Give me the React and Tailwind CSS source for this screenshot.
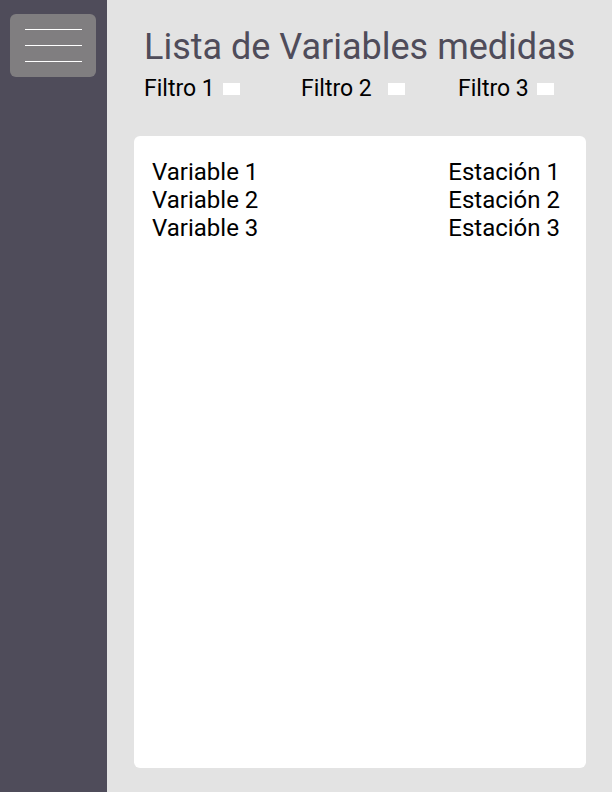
import React from "react";

const rows = [
  { variable: "Variable 1", station: "Estación 1" },
  { variable: "Variable 2", station: "Estación 2" },
  { variable: "Variable 3", station: "Estación 3" },
];

const filters = [
  { label: "Filtro 1", box: "ml-[8px]" },
  { label: "Filtro 2", box: "ml-[16px]" },
  { label: "Filtro 3", box: "ml-[8px]" },
];

export default function App() {
  return (
    <div className="flex w-[612px] h-[792px] font-['Roboto',sans-serif] bg-[#e3e3e3]">
      <aside className="w-[107px] shrink-0 bg-[#4f4c5a] pt-[14px] pl-[10px]">
        <button className="w-[86px] h-[63px] rounded-[6px] bg-[#807e80] flex flex-col items-center justify-center gap-[15px]">
          <span className="block w-[57px] h-px bg-white" />
          <span className="block w-[57px] h-px bg-white" />
          <span className="block w-[57px] h-px bg-white" />
        </button>
      </aside>
      <main className="flex-1 min-w-0 flex flex-col pl-[27px] pr-[26px] pt-[25px] pb-[24px]">
        <h1 className="pl-[10px] text-[36px] leading-[44px] text-[#4f4c5a] whitespace-nowrap">
          Lista de Variables medidas
        </h1>
        <div className="pl-[10px] mt-[6px] flex">
          {filters.map((f) => (
            <label key={f.label} className="w-[157px] last:w-auto flex items-center text-[23px] leading-[28px] text-black">
              {f.label}
              <span className={`${f.box} inline-block w-[17px] h-[12px] bg-white`} />
            </label>
          ))}
        </div>
        <section className="mt-[33px] flex-1 bg-white rounded-[6px] px-[18px] pt-[22px]">
          {rows.map((r) => (
            <div key={r.variable} className="flex justify-between pr-[8px] text-[24px] leading-[28px] text-black">
              <span>{r.variable}</span>
              <span>{r.station}</span>
            </div>
          ))}
        </section>
      </main>
    </div>
  );
}
